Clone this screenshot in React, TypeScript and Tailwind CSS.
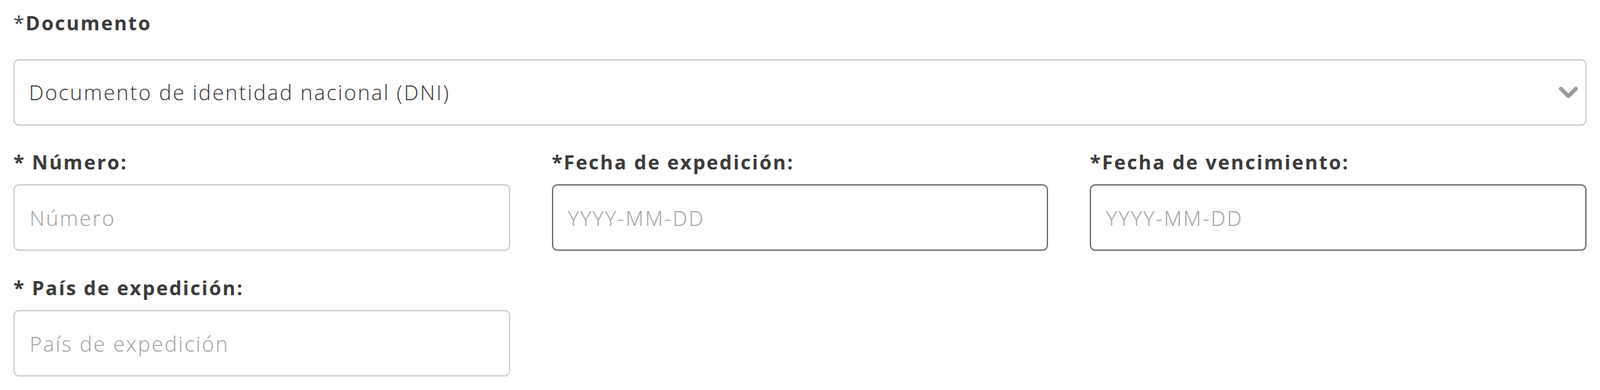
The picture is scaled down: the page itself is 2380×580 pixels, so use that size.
import { useState } from 'react'

const font = { fontFamily: '"Open Sans", "Liberation Sans", sans-serif' }

function Label({ children }: { children: React.ReactNode }) {
  return (
    <label className="block text-[29px] leading-[40px] font-bold tracking-[2.1px] text-[#3b3b3b]">
      {children}
    </label>
  )
}

function Field({
  label,
  placeholder,
  dark = false,
}: {
  label: string
  placeholder: string
  dark?: boolean
}) {
  const [value, setValue] = useState('')
  return (
    <div>
      <Label>{label}</Label>
      <input
        type="text"
        value={value}
        onChange={(e) => setValue(e.target.value)}
        placeholder={placeholder}
        className={`mt-[13px] block w-full h-[99px] rounded-[8px] border-2 bg-white px-[22px] text-[31px] font-light tracking-[2.1px] text-[#333] placeholder:text-[#9e9e9e] focus:outline-none ${
          dark ? 'border-[#727272]' : 'border-[#cfcfcf]'
        }`}
      />
    </div>
  )
}

export default function App() {
  const [doc, setDoc] = useState('dni')

  return (
    <div className="w-[2380px] h-[580px] bg-white px-[20px] pt-[14px]" style={font}>
      {/* Documento */}
      <Label>
        <span className="font-normal">*</span>Documento
      </Label>
      <div className="relative mt-[34px]">
        <select
          value={doc}
          onChange={(e) => setDoc(e.target.value)}
          className="block w-full h-[99px] appearance-none rounded-[8px] border-2 border-[#cfcfcf] bg-white pl-[21px] pr-[60px] text-[31px] font-light tracking-[2.1px] text-[#333] focus:outline-none"
        >
          <option value="dni">Documento de identidad nacional (DNI)</option>
          <option value="pasaporte">Pasaporte</option>
        </select>
        <svg
          className="pointer-events-none absolute right-[13px] top-1/2 -translate-y-1/2"
          width="28"
          height="19"
          viewBox="0 0 28 19"
        >
          <path d="M3 3.5 L14 14.5 L25 3.5" fill="none" stroke="#9a9a9a" strokeWidth="6" strokeLinecap="round" strokeLinejoin="round" />
        </svg>
      </div>

      <div className="mt-[34px] grid grid-cols-3 gap-x-[62px] gap-y-[35px]">
        <Field label="* Número:" placeholder="Número" />
        <Field label="*Fecha de expedición:" placeholder="YYYY-MM-DD" dark />
        <Field label="*Fecha de vencimiento:" placeholder="YYYY-MM-DD" dark />
        <Field label="* País de expedición:" placeholder="País de expedición" />
      </div>
    </div>
  )
}
